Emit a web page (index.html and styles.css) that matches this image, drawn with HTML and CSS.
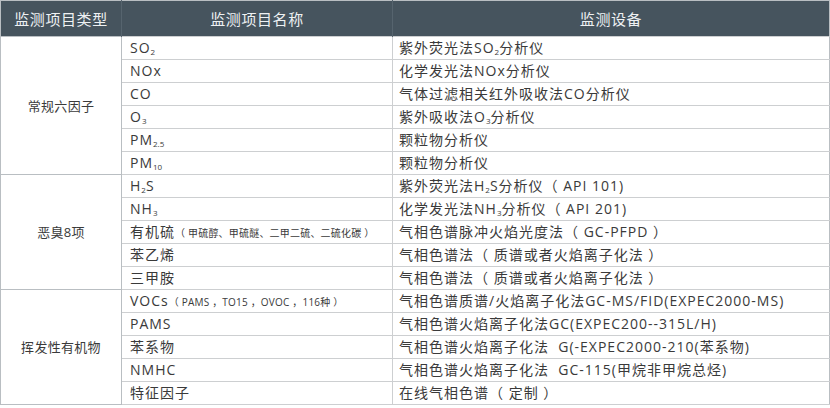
FILE: index.html
```html
<!DOCTYPE html>
<html lang="zh-CN">
<head>
<meta charset="utf-8">
<link rel="stylesheet" href="styles.css">
</head>
<body>
<table class="grid">
  <colgroup>
    <col class="c1"><col class="c2"><col class="c3">
  </colgroup>
  <thead>
    <tr><th>监测项目类型</th><th>监测项目名称</th><th>监测设备</th></tr>
  </thead>
  <tbody>
    <tr><td class="type" rowspan="6">常规六因子</td><td class="name">SO<sub>2</sub></td><td class="dev">紫外荧光法SO<sub>2</sub>分析仪</td></tr>
    <tr><td class="name">NOx</td><td class="dev">化学发光法NOx分析仪</td></tr>
    <tr><td class="name">CO</td><td class="dev">气体过滤相关红外吸收法CO分析仪</td></tr>
    <tr><td class="name">O<sub>3</sub></td><td class="dev">紫外吸收法O<sub>3</sub>分析仪</td></tr>
    <tr><td class="name">PM<sub>2.5</sub></td><td class="dev">颗粒物分析仪</td></tr>
    <tr><td class="name">PM<sub>10</sub></td><td class="dev">颗粒物分析仪</td></tr>
    <tr><td class="type" rowspan="5">恶臭8项</td><td class="name">H<sub>2</sub>S</td><td class="dev">紫外荧光法H<sub>2</sub>S分析仪（ API 101)</td></tr>
    <tr><td class="name">NH<sub>3</sub></td><td class="dev">化学发光法NH<sub>3</sub>分析仪（ API 201)</td></tr>
    <tr><td class="name">有机硫<span class="note">（ 甲硫醇、甲硫醚、二甲二硫、二硫化碳 ）</span></td><td class="dev">气相色谱脉冲火焰光度法（ GC-PFPD ）</td></tr>
    <tr><td class="name">苯乙烯</td><td class="dev">气相色谱法（ 质谱或者火焰离子化法 ）</td></tr>
    <tr><td class="name">三甲胺</td><td class="dev">气相色谱法（ 质谱或者火焰离子化法 ）</td></tr>
    <tr><td class="type" rowspan="5">挥发性有机物</td><td class="name">VOCs<span class="note">（ PAMS ，TO15 ，OVOC ，116种 ）</span></td><td class="dev">气相色谱质谱/火焰离子化法GC-MS/FID(EXPEC2000-MS)</td></tr>
    <tr><td class="name">PAMS</td><td class="dev">气相色谱火焰离子化法GC(EXPEC200--315L/H)</td></tr>
    <tr><td class="name">苯系物</td><td class="dev">气相色谱火焰离子化法&nbsp;&nbsp;G(-EXPEC2000-210(苯系物)</td></tr>
    <tr><td class="name">NMHC</td><td class="dev">气相色谱火焰离子化法&nbsp;&nbsp;GC-115(甲烷非甲烷总烃)</td></tr>
    <tr><td class="name">特征因子</td><td class="dev">在线气相色谱（ 定制 ）</td></tr>
  </tbody>
</table>
</body>
</html>
```
FILE: styles.css
```css
html, body {
  margin: 0;
  padding: 0;
  background: #ffffff;
}
body {
  font-family: "Open Sans", "Noto Sans CJK SC", sans-serif;
  color: #3a3a3a;
}
.grid {
  border-collapse: collapse;
  table-layout: fixed;
  width: 829px;
  border: 1px solid #b9bec2;
}
.c1 { width: 121px; }
.c2 { width: 271px; }
.c3 { width: 437px; }
thead th {
  background: #46545e;
  color: #eef1f3;
  font-weight: normal;
  font-size: 15px;
  letter-spacing: 0.6px;
  height: 35px;
  padding: 0;
  text-align: center;
  vertical-align: middle;
  border-left: 1px solid #56646e;
  line-height: 16px;
}
thead th:first-child { border-left: none; }
tbody tr { height: 23px; }
tbody td {
  height: 22px;
  padding: 0;
  border: 1px solid #cdcfd1;
  font-size: 14px;
  line-height: 16px;
  letter-spacing: 1px;
  white-space: nowrap;
  overflow: hidden;
  vertical-align: middle;
}
td.type {
  text-align: center;
  font-size: 13px;
  letter-spacing: 0.3px;
  border-left: none;
  border-color: #b9bec2;
}
td.name { padding-left: 8px; }
td.dev { padding-left: 6px; border-right: none; }
sub {
  font-size: 8px;
  line-height: 1;
  vertical-align: baseline;
  position: relative;
  top: 2px;
  letter-spacing: 0;
}
.note {
  font-size: 10px;
  line-height: 1;
  letter-spacing: 0.2px;
}
```
